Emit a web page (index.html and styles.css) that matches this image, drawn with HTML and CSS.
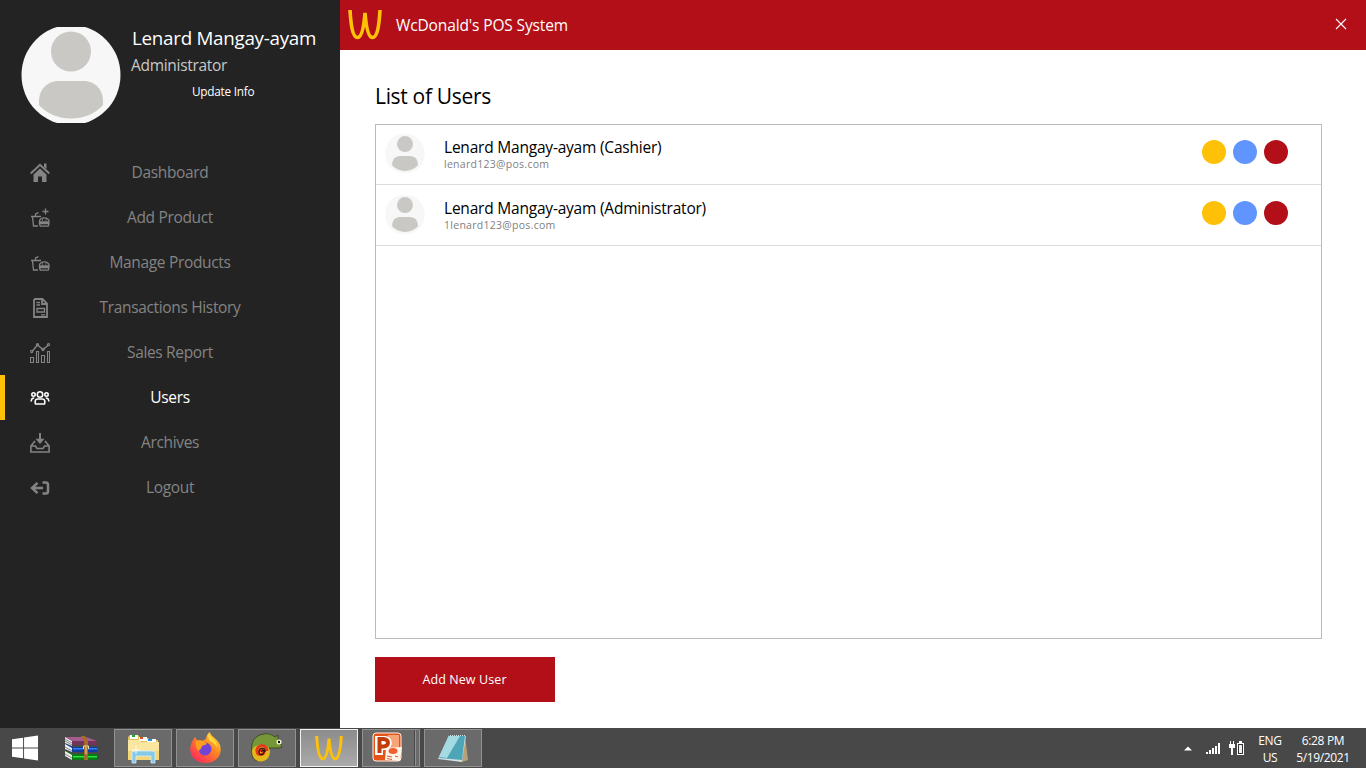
FILE: index.html
```html
<!DOCTYPE html>
<html lang="en">
<head>
<meta charset="utf-8">
<title>WcDonald's POS System</title>
<link rel="stylesheet" href="styles.css">
</head>
<body>
<svg class="defs" aria-hidden="true">
  <symbol id="person" viewBox="0 0 100 96">
    <clipPath id="disc"><ellipse cx="50" cy="48" rx="49.5" ry="50"/></clipPath>
    <g clip-path="url(#disc)"><path fill="#f7f7f7" d="M0 0h100v96H0z"/>
    <circle cx="50" cy="24.500" r="20" fill="#c9c8c4"/>
    <path fill="#c9c8c4" d="M37.500 54h25c12 0 19.500 9 19.500 20v4C74 87 62 91.500 50 91.500S26 87 18 78v-4c0-11 8-20 19.500-20z"/></g>
  </symbol>
  <symbol id="wc" viewBox="0 0 34 30">
    <path fill="none" stroke="#ffc107" stroke-width="3.600" d="M2 0C3 17 5 27.500 9.500 27.500S16 15 17 3C18 15 20 27.500 24.500 27.500S31 17 32 0"/>
  </symbol>
  <symbol id="meal" viewBox="0 0 20 15">
    <path d="M1 4.500h10M2.500 5l1 9H8M5.500 4.500V2L8.500.700M9.500 10C8.500 4.500 20 4.500 19 10zM8.800 11.500h10.700M9.500 12l.8 2.200h7.900L19 12M12 8h1M15.500 8h1"/>
  </symbol>
</svg>
<div class="screen">
  <aside class="sidebar">
    <div class="profile">
      <svg class="photo"><use href="#person"/></svg>
      <div class="who">
        <div class="name">Lenard Mangay-ayam</div>
        <div class="role">Administrator</div>
        <div class="update">Update Info</div>
      </div>
    </div>
    <nav class="menu">
      <a class="item"><svg class="icon" viewBox="0 0 20 20"><path fill="currentColor" d="M3.500 11.500 10 5.500l6.500 6V19H12v-5.500H8V19H3.500z"/><path d="M.7 10.500 10 1.800l9.300 8.700" fill="none" stroke="currentColor" stroke-width="2"/><path fill="currentColor" d="M14 .5h2.500V6L14 4z"/></svg><span>Dashboard</span></a>
      <a class="item"><svg class="icon line" viewBox="0 0 20 20"><use href="#meal" y="4" width="20" height="15"/><path d="M15.500.5v6M12.500 3.500h6"/></svg><span>Add Product</span></a>
      <a class="item"><svg class="icon line" viewBox="0 0 20 20"><use href="#meal" y="3" width="20" height="15"/></svg><span>Manage Products</span></a>
      <a class="item"><svg class="icon line doc" viewBox="0 0 20 20"><path d="M5 1h7.500L17 5.500V19H4V2zM12 1.500V6h5"/><path class="thin" d="M6.500 4.500h3.500M6.500 7h3.500M7 10.500h7.500V14H7zM11 16.800h4"/></svg><span>Transactions History</span></a>
      <a class="item"><svg class="icon line chart" viewBox="0 0 20 20"><path d="M.5 14.500h3v5h-3zM6.500 8.500h2v11h-2zM11.500 12.500h3v7h-3zM17.500 8.500h2v11h-2z"/><path class="trend" d="m2 8.500 5.500-6.500L13 6.500 18.500 2"/><circle cx="1.700" cy="8.500" r="1.100"/><circle cx="7.500" cy="1.700" r="1.100"/><circle cx="13" cy="6.500" r="1.100"/><circle cx="18.500" cy="1.700" r="1.100"/></svg><span>Sales Report</span></a>
      <a class="item active"><svg class="icon line people" viewBox="0 0 20 20"><circle cx="10" cy="6.500" r="2.700"/><circle cx="3.500" cy="6.500" r="1.700"/><circle cx="16.500" cy="6.500" r="1.700"/><path d="M5.500 16c-1-3 0-5 2-5h5c2 0 3 2 2 5zM1.200 13.500c0-2.500.8-3.500 3-3.500M18.800 13.500c0-2.500-.8-3.500-3-3.500"/></svg><span>Users</span></a>
      <a class="item"><svg class="icon line people" viewBox="0 0 20 20"><path stroke-width="2" d="M10 0v8"/><path fill="currentColor" stroke="none" d="M5.500 5.800 10 11l4.500-5.200z"/><path d="M5 8 .9 13v6h18.200v-6L15 8M1 13h4.500l1.500 2.500h6l1.500-2.500H19"/></svg><span>Archives</span></a>
      <a class="item"><svg class="icon logout" viewBox="0 0 20 20"><path d="M2.500 10H13M7.500 4.800 2 10l5.500 5.200M12.500 4.500h3.200q2.300 0 2.300 2.300v6.400q0 2.300-2.300 2.300h-3.200"/></svg><span>Logout</span></a>
    </nav>
  </aside>
  <main class="main">
    <header class="topbar">
      <svg class="logo"><use href="#wc"/></svg>
      <span class="title">WcDonald's POS System</span>
      <svg class="close" viewBox="0 0 12 12"><path d="m1 1 10 10M11 1 1 11"/></svg>
    </header>
    <section class="content">
      <h1 class="heading">List of Users</h1>
      <div class="list">
        <div class="row first"><svg class="thumb"><use href="#person"/></svg>
          <div class="info"><div class="uname">Lenard Mangay-ayam (Cashier)</div><div class="mail">lenard123@pos.com</div></div>
          <div class="dots"><i class="dot yellow"></i><i class="dot blue"></i><i class="dot red"></i></div></div>
        <div class="row"><svg class="thumb"><use href="#person"/></svg>
          <div class="info"><div class="uname">Lenard Mangay-ayam (Administrator)</div><div class="mail">1lenard123@pos.com</div></div>
          <div class="dots"><i class="dot yellow"></i><i class="dot blue"></i><i class="dot red"></i></div></div>
      </div>
      <button class="add">Add New User</button>
    </section>
  </main>
  <footer class="taskbar">
    <svg class="start" viewBox="0 0 28 26"><path fill="#fff" d="M0 4 11.500 2.300v10.200H0zM12.500 2.100 27 0v12.500H12.500zM0 13.500h11.500v10.200L0 22zM12.500 13.500H27V26l-14.500-2.100z"/></svg>
    <svg class="winrar" viewBox="0 0 34 26"><path fill="#72345d" d="M1 2h20l11 5v3H8L1 7z"/><path fill="#a75d8b" d="M1 2h20l11 4H8z"/><path fill="#123aa0" d="m1 9 7 3h24v5H8l-7-3z"/><path fill="#2f83ff" d="M8 13h24v1.500H8z"/><path fill="#087b19" d="m1 16 7 3h24v6H8l-7-4z"/><path fill="#28e436" d="M8 21h24v1.500H8z"/><path fill="#eee" d="m0 2 7 4v5L0 8zM0 9l7 4v4l-7-3zM0 16l7 4v5l-7-4z"/><path stroke="#555" stroke-width=".7" d="m0 4 7 4M0 6l7 4M0 12l7 4M0 19l7 4"/><path fill="#a56b28" d="M16 1h4l3 5v19h-4V6z"/><path fill="none" stroke="#f1dda5" d="M18.500 14v-3h5v3M21 12v7"/></svg>
    <div class="tasks">
      <div class="task"><svg class="app" viewBox="0 0 32 32"><path fill="#e3bd55" d="M1 5 3 3h8l2 3h8l2 2h8v19H1z"/><path fill="#fff" d="M3 3h8v4H3zM12 5h8v4h-8zM20 7h9v4h-9z"/><path fill="#1eac22" d="M5 3h3v2H5z"/><path fill="#dd4e25" d="M13 5h3v2h-3z"/><path fill="#268fe0" d="M21 7h4v2h-4z"/><path fill="#fae69e" d="M1 8h11l2 2h18v18H1z"/><path fill="#f4d578" d="M1 19h31v9H1z"/><path fill="#84c9e8" stroke="#d9f5ff" stroke-width=".7" d="M5 31V20l3-1h17l3 1v11h-4v-7H9v7z"/><path stroke="#fff" stroke-width=".8" d="M9 14v8M5 18h8"/></svg></div>
      <div class="task"><svg class="app" viewBox="0 0 32 32"><defs><linearGradient id="fire" x1="1" y1="0" x2=".2" y2="1"><stop stop-color="#fff34f"/><stop offset=".45" stop-color="#ff8a20"/><stop offset="1" stop-color="#ff245f"/></linearGradient></defs><path fill="url(#fire)" d="M4 8 6 5l2 3 5 1 4-2c0-3 2-6 4-7 0 4 8 7 10 13 3 10-4 18-14 18C4 31-3 20 4 8z"/><circle cx="16" cy="17" r="6.500" fill="#7044d5"/><path fill="#ff9d20" d="M7 9c4-2 8 0 11 3l-5 2c-1 3-2 4-4 5-2-3-3-6-2-10z"/><path fill="#ffdd3f" d="M20 1c1 5 8 7 8 14-2-3-4-5-7-6-2-2-2-5-1-8z"/></svg></div>
      <div class="task"><svg class="app" viewBox="0 0 32 32"><path fill="#769638" stroke="#34431c" stroke-width=".8" d="M1 21C-1 10 4 3 13 2c5-1 8 1 11 3l3-2v4l4 8-3 1H18c0 8-3 13-10 13-5 0-7-4-7-8z"/><path fill="#e5b719" d="M1 19c1-8 17-8 18 0 0 14-18 14-18 0z"/><path fill="none" stroke="#e43a1b" stroke-width="3" d="M16 19c0-8-11-6-10 0 0 5 7 4 7 1 0-3-4-2-4 0"/><path fill="none" stroke="#271714" stroke-width="1.200" d="M14 20c1-5-6-5-6 0 0 4 5 3 5 0 0-3-3-2-2 0"/><circle cx="28" cy="10" r="2.500" fill="#f8ffd4"/><circle cx="28" cy="10" r="1.200"/></svg></div>
      <div class="task current"><svg class="wicon" preserveAspectRatio="none" viewBox="0 0 34 30"><path fill="none" stroke="#ffc107" stroke-width="3.600" d="M2 0C3 17 5 27.500 9.500 27.500S16 15 17 3C18 15 20 27.500 24.500 27.500S31 17 32 0"/></svg></div>
      <div class="task stack"><svg class="app" viewBox="0 0 32 32"><rect x="2" y="1" width="28" height="28" rx="3" fill="#e65317" stroke="#fff0e6"/><path fill="#f9a476" d="M17 3h11v14H17z"/><path fill="#fff" d="M4 4h10c9 0 9 14 0 14h-2v5H4z"/><path fill="none" stroke="#c23c0c" stroke-width="4" d="M8.500 21V7h4c6 0 6 7.500 0 7.500h-4"/><path fill="#fff4e9" d="m15 16 16-1-2 14-15-1z"/><ellipse cx="22" cy="19" rx="4.500" ry="3" fill="#ee6030"/><path stroke="#dc5733" d="m16 24 5 1M24 24l3 1M16 26.500l5 1"/></svg></div>
      <div class="task"><svg class="app" viewBox="0 0 32 32"><path fill="#b8a078" d="m28 4 3 24-6 2z"/><path fill="#d5e3e6" d="M12 3h17l-4 27-24-3z"/><path fill="#4fa5b8" d="M12 4h16l-3 24-23-2z"/><path fill="#a4dae1" d="M12 4h11L10 26l-8-1z"/><path stroke="#667" stroke-dasharray="1 1" stroke-width="2" d="M12 3h17"/></svg></div>
    </div>
    <div class="tray">
      <svg class="arrow" viewBox="0 0 8 5"><path fill="#fff" d="m0 4.500 4-4 4 4z"/></svg>
      <svg class="signal" viewBox="0 0 16 13"><path fill="#fff" d="M1 10h2v2H1zM4 8h2v4H4zM7 6h2v6H7zM10 4h2v8h-2zM13 1h2v11h-2z"/></svg>
      <svg class="battery" viewBox="0 0 16 16"><path fill="#fff" d="M1 1h1v3H1zM4 1h1v3H4zM0 4h6v4H4v7H2V8H0zM8 3h2V1h3v2h2v12H8z"/><path fill="#333" d="M9 4h5v10H9z"/><path fill="#eee" d="M10 5h3v8h-3z"/></svg>
      <div class="lang"><span>ENG</span><span>US</span></div>
      <div class="clock"><span>6:28 PM</span><span>5/19/2021</span></div>
    </div>
  </footer>
</div>
</body>
</html>
```
FILE: styles.css
```css
* { box-sizing: border-box; }
body { margin: 0; font-family: "Open Sans", "Noto Sans", sans-serif; background: #fff; color: #000; }
svg { display: block; flex: none; }
.defs { width: 0; height: 0; float: left; }
.screen { display: grid; grid-template: 728px 40px / 340px 1fr; width: 1366px; height: 768px; overflow: hidden; white-space: nowrap; }

.sidebar { background: #232323; }
.profile { display: flex; height: 150px; padding: 27px 0 0 21px; }
.photo { width: 100px; height: 96px; }
.who { padding-left: 10px; width: 210px; }
.name { color: #fff; font-size: 18.8px; line-height: 24px; padding-left: 1px; letter-spacing: -.27px; margin-top: -1px; }
.role { color: #c8c8c8; font-size: 15.5px; line-height: 22px; margin-top: 4px; letter-spacing: -.3px; }
.update { color: #fff; font-size: 11.8px; line-height: 16px; margin-top: 7px; padding-left: 61px; letter-spacing: -.25px; }
.item { display: flex; align-items: center; height: 45px; padding-left: 30px; color: #848484; font-size: 15.5px; letter-spacing: -.34px; }
.item span { width: 240px; text-align: center; padding-bottom: 2px; }
.icon { width: 20px; height: 20px; }
.line { fill: none; stroke: currentColor; stroke-width: 1.3; }
.people { stroke-width: 1.6; }
.doc { stroke-width: 1.8; }
.doc .thin { stroke-width: 1.3; }
.chart { stroke-width: 1.1; }
.chart .trend { stroke-width: 1.4; }
.logout { fill: none; stroke: currentColor; stroke-width: 2.5; }
.active { color: #fff; border-left: 5px solid #ffc107; padding-left: 25px; }

.topbar { display: flex; align-items: center; height: 50px; background: #b20f18; padding: 0 19px 0 8px; }
.logo { width: 34px; height: 30px; }
.title { color: #fff; font-size: 15.5px; letter-spacing: -.13px; margin-left: 14px; flex: 1; }
.close { width: 12px; height: 12px; stroke: #fff; stroke-width: 1.1; margin-bottom: 2px; }
.content { padding: 30px 44px 0 35px; }
.heading { margin: 0; height: 44px; font-size: 21px; font-weight: 400; line-height: 33px; letter-spacing: -.32px; }
.list { height: 515px; border: 1px solid #bcbcbc; }
.row { display: flex; height: 61px; border-bottom: 1px solid #dcdcdc; padding: 10px 32px 0 9px; }
.row.first { height: 60px; padding-top: 9px; }
.thumb { width: 40px; height: 39px; }
.info { padding: 2px 0 0 19px; flex: 1; }
.uname { font-size: 15.5px; line-height: 22px; letter-spacing: -.21px; }
.mail { font-size: 10.5px; line-height: 12px; color: #808080; letter-spacing: .28px; }
.dots { display: flex; gap: 7px; padding: 6px 1px 0 0; }
.dot { width: 24px; height: 24px; border-radius: 50%; }
.yellow { background: #ffc107; }
.blue { background: #6095ff; }
.red { background: #b20f18; }
.add { display: block; width: 180px; height: 45px; margin-top: 18px; border: 0; padding: 0 1px 0 0; background: #b20f18; color: #fff; font: 12.5px "Open Sans", sans-serif; letter-spacing: .1px; }

.taskbar { grid-column: 1 / -1; display: flex; align-items: center; background: #484848; padding: 0 16px 0 12px; }
.start { width: 27px; height: 26px; }
.winrar { width: 34px; height: 26px; margin-left: 26px; }
.tasks { display: flex; gap: 4px; margin-left: 15px; flex: 1; }
.task { display: flex; justify-content: center; align-items: center; width: 58px; height: 38px; border: 1px solid #929292; background: #6a6a6a; }
.app { width: 32px; height: 32px; }
.current { background: linear-gradient(#8c8c8c, #aaa); border-color: #f2f2f2; }
.wicon { width: 28px; height: 25px; }
.stack { padding-right: 8px; box-shadow: inset -3px 0 #6a6a6a, inset -4px 0 #929292, inset -5px 0 #484848; }
.tray { display: flex; align-items: center; color: #fff; font-size: 12px; letter-spacing: -.35px; }
.arrow { width: 8px; height: 5px; }
.signal { width: 16px; height: 13px; margin-left: 13px; }
.battery { width: 16px; height: 16px; margin-left: 8px; }
.lang, .clock { display: flex; flex-direction: column; align-items: center; line-height: 17px; }
.lang { width: 26px; margin-left: 12px; padding-top: 1px; }
.clock { width: 54px; margin-left: 13px; padding-top: 1px; }
```
